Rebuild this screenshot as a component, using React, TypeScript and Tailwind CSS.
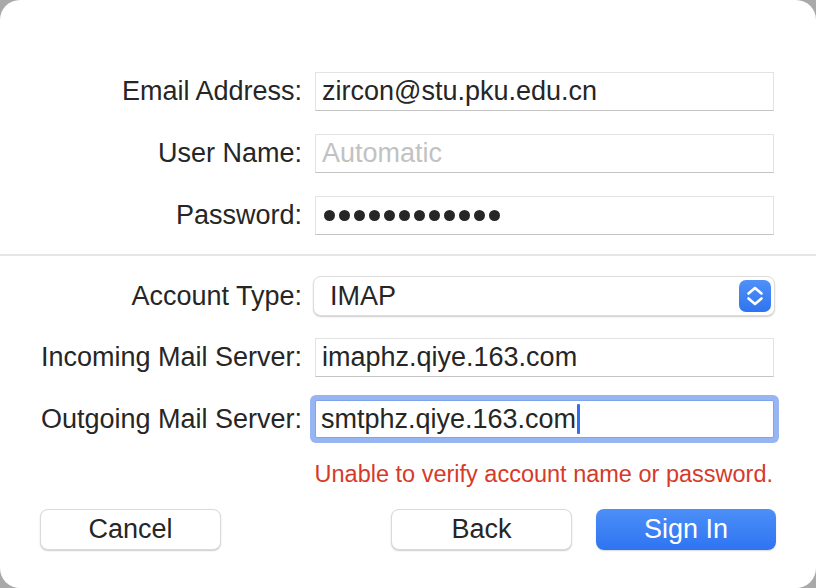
import React from "react";

const font = { fontFamily: '"Liberation Sans", Arial, sans-serif' };

function Label({ children }: { children: React.ReactNode }) {
  return (
    <div className="w-[302px] shrink-0 text-right text-[27px] leading-none text-[#262626]">
      {children}
    </div>
  );
}

function Field({ children }: { children: React.ReactNode }) {
  return (
    <div className="ml-[13px] flex h-[39px] w-[459px] items-center border border-[#e3e3e3] border-b-[#c4c4c4] bg-white pl-[6px] text-[27px] leading-none text-[#262626]">
      {children}
    </div>
  );
}

export default function App() {
  return (
    <div className="h-[588px] w-[816px] bg-[#a9a9a9]" style={font}>
      <div className="flex h-full w-full flex-col rounded-[20px] bg-white">
        <div className="flex flex-col gap-[23px] pt-[72px]">
          <div className="flex items-center">
            <Label>Email Address:</Label>
            <Field>zircon@stu.pku.edu.cn</Field>
          </div>
          <div className="flex items-center">
            <Label>User Name:</Label>
            <Field>
              <span className="text-[#c2c2c2]">Automatic</span>
            </Field>
          </div>
          <div className="flex items-center">
            <Label>Password:</Label>
            <Field>
              <div className="flex gap-[4px] pl-[2px]">
                {Array.from({ length: 12 }).map((_, i) => (
                  <div key={i} className="h-[11px] w-[11px] rounded-full bg-[#262626]" />
                ))}
              </div>
            </Field>
          </div>
        </div>

        <div className="mt-[19px] h-[2px] w-full bg-[#e6e6e6]" />

        <div className="mt-[20px] flex flex-col">
          <div className="flex items-center">
            <Label>Account Type:</Label>
            <div className="ml-[11px] flex h-[40px] w-[462px] items-center justify-between rounded-[8px] border border-[#dedede] bg-white pl-[16px] pr-[3px] text-[27px] leading-none text-[#262626] shadow-[0_1px_1.5px_rgba(0,0,0,0.2)]">
              <span>IMAP</span>
              <div className="flex h-[32px] w-[32px] items-center justify-center rounded-[7px] bg-gradient-to-b from-[#4f91f8] to-[#2f74ef]">
                <svg width="32" height="32" viewBox="0 0 32 32" fill="none">
                  <path d="M9.5 13.5 L16 8 L22.5 13.5" stroke="white" strokeWidth="2.6" strokeLinecap="round" strokeLinejoin="round" />
                  <path d="M9.5 18.5 L16 24 L22.5 18.5" stroke="white" strokeWidth="2.6" strokeLinecap="round" strokeLinejoin="round" />
                </svg>
              </div>
            </div>
          </div>

          <div className="mt-[22px] flex items-center">
            <Label>Incoming Mail Server:</Label>
            <Field>imaphz.qiye.163.com</Field>
          </div>

          <div className="mt-[23px] flex items-center">
            <Label>Outgoing Mail Server:</Label>
            <div className="ml-[13px] flex h-[38px] w-[459px] items-center rounded-[2px] border border-[#7fa3ee] bg-white pl-[5px] text-[27px] leading-none text-[#262626] shadow-[0_0_0_5px_#97b4f3]">
              <span>smtphz.qiye.163.com</span>
              <span className="ml-[1px] inline-block h-[30px] w-[3px] rounded-[1px] bg-[#2f6ef5]" />
            </div>
          </div>
        </div>

        <div className="mt-[25px] flex justify-end pr-[43px] text-[23.5px] leading-none text-[#d63a28]">
          Unable to verify account name or password.
        </div>

        <div className="mt-[22px] flex items-center px-[40px]">
          <button className="flex h-[41px] w-[181px] items-center justify-center rounded-[8px] border border-[#dadada] bg-white text-[27px] leading-none text-[#262626] shadow-[0_1px_1.5px_rgba(0,0,0,0.2)]">
            Cancel
          </button>
          <button className="ml-auto flex h-[41px] w-[181px] items-center justify-center rounded-[8px] border border-[#dadada] bg-white text-[27px] leading-none text-[#262626] shadow-[0_1px_1.5px_rgba(0,0,0,0.2)]">
            Back
          </button>
          <button className="ml-[24px] flex h-[41px] w-[180px] items-center justify-center rounded-[8px] bg-gradient-to-b from-[#4c8ff8] to-[#2e74f1] text-[27px] leading-none text-white shadow-[0_1px_1.5px_rgba(0,0,0,0.15)]">
            Sign In
          </button>
        </div>
      </div>
    </div>
  );
}
